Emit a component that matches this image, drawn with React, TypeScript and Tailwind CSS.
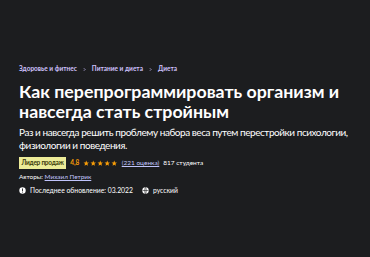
import React from "react";

const Star = () => (
  <svg width="6.5" height="6.5" viewBox="0 0 24 24" fill="#f69c08">
    <path d="M12 2l2.9 6.9 7.1.6-5.4 4.7 1.6 7-6.2-3.8-6.2 3.8 1.6-7L1.9 9.5 9 8.9z" />
  </svg>
);

const Chevron = () => (
  <svg width="5" height="5" viewBox="0 0 24 24" fill="none" stroke="#cec0fc" strokeWidth="3.5">
    <path d="M9 6l6 6-6 6" />
  </svg>
);

export default function App() {
  return (
    <div className="w-[370px] h-[257px] bg-[#1c1d1f] text-white" style={{ fontFamily: 'Lato, "Noto Sans", sans-serif' }}>
      <div className="pl-[19px] pt-[64px]">
        <div className="flex items-center gap-[5px] text-[6.5px] font-bold text-[#cec0fc] leading-[10px]">
          <span>Здоровье и фитнес</span>
          <Chevron />
          <span>Питание и диета</span>
          <Chevron />
          <span>Диета</span>
        </div>
        <h1 className="mt-[7px] text-[17.8px] font-bold leading-[20px] whitespace-nowrap">
          Как перепрограммировать организм и<br />навсегда стать стройным
        </h1>
        <p className="mt-[5px] text-[10px] tracking-[-0.45px] leading-[13px] text-white whitespace-nowrap">
          Раз и навсегда решить проблему набора веса путем перестройки психологии,<br />физиологии и поведения.
        </p>
        <div className="mt-[5px] flex items-center gap-[4px] text-[6.5px] leading-[10px]">
          <span className="bg-[#eceb98] text-[#3d3c0a] font-bold px-[2.5px] py-[1px] tracking-[-0.25px]">Лидер продаж</span>
          <span className="font-bold text-[#f69c08]">4,8</span>
          <span className="flex items-center gap-[0.5px]">
            <Star /><Star /><Star /><Star /><Star />
          </span>
          <span className="text-[#c0c4fc] underline">(221 оценка)</span>
          <span>817 студента</span>
        </div>
        <div className="mt-[3px] text-[6.4px] leading-[10px]">
          Авторы: <span className="text-[#c0c4fc] underline">Михаил Петрик</span>
        </div>
        <div className="mt-[3px] flex items-center text-[6.8px] leading-[10px]">
          <svg width="7" height="7" viewBox="0 0 24 24" className="mr-[4px]">
            <circle cx="12" cy="12" r="11" fill="white" />
            <rect x="10.5" y="5" width="3" height="9" fill="#1c1d1f" />
            <rect x="10.5" y="16" width="3" height="3" fill="#1c1d1f" />
          </svg>
          <span>Последнее обновление: 03.2022</span>
          <svg width="7" height="7" viewBox="0 0 24 24" className="ml-[9px] mr-[4px]" fill="none">
            <circle cx="12" cy="12" r="11" fill="white" />
            <path d="M2 12h20M12 1.5c3.5 3 3.5 18 0 21M12 1.5c-3.5 3-3.5 18 0 21" stroke="#1c1d1f" strokeWidth="2" />
          </svg>
          <span>русский</span>
        </div>
      </div>
    </div>
  );
}
